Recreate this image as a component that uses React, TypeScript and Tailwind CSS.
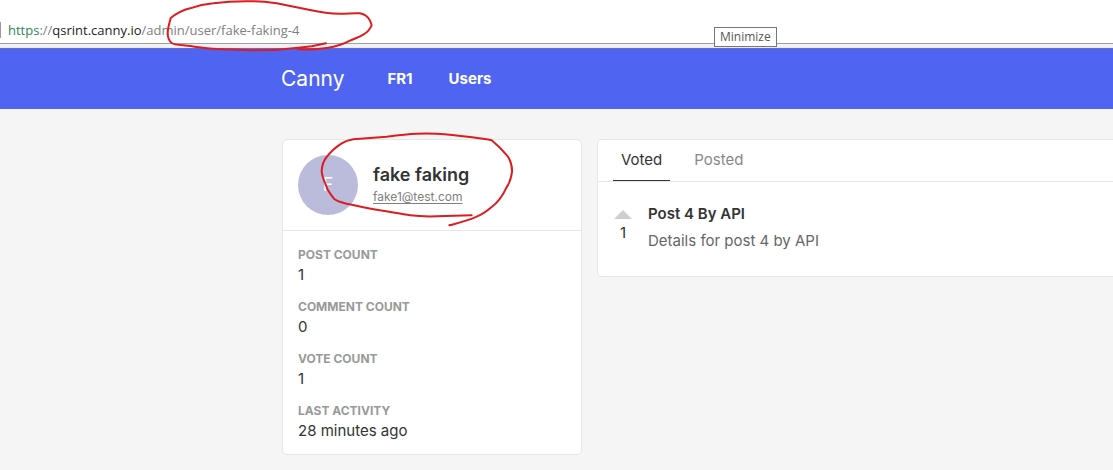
import React from "react";

interface Stat {
  label: string;
  value: string;
}

const stats: Stat[] = [
  { label: "Post count", value: "1" },
  { label: "Comment count", value: "0" },
  { label: "Vote count", value: "1" },
  { label: "Last activity", value: "28 minutes ago" },
];

const AddressBar: React.FC = () => {
  return (
    <div className="relative h-12 border-b border-[#e9e9ef] bg-[#f2f2f2]">
      <div className="flex h-11 items-center border-b border-[#a0a0a0] bg-white pt-4">
        <span className="h-4 w-px bg-[#9a9a9a]" />
        <p className="pl-[7px] font-['Open_Sans',sans-serif] text-[13px] leading-5 text-[#808080]">
          <span className="text-[#2f8458]">https</span>://
          <span className="text-[#222222]">qsrint.canny.io</span>
          /admin/user/fake-faking-4
        </p>
      </div>
      <div
        role="tooltip"
        className="absolute left-[714px] top-[27px] z-10 flex h-5 items-center border border-[#767676] bg-white px-[5px] font-['Open_Sans',sans-serif] text-xs text-[#575757]"
      >
        Minimize
      </div>
      <svg
        className="pointer-events-none absolute left-[160px] top-0 z-10 h-[52px] w-[220px]"
        viewBox="480 0 660 156"
        fill="none"
        stroke="#dc1c20"
        strokeWidth="6"
        strokeLinecap="round"
        strokeLinejoin="round"
      >
        <path d="M978 130L935 139L895 143C850 149 810 151 770 151C720 151 690 148 650 147C610 145 575 138 550 136C528 135 520 134 514 128C505 120 503 112 503 100C503 84 508 70 512 54C530 40 550 30 570 25C600 15 620 12 640 10C685 4 720 3 760 4C785 4 810 7 830 10C870 18 900 24 930 30C965 38 995 41 1020 41C1045 41 1060 39 1080 40C1095 43 1105 52 1110 62L1115 75C1110 90 1100 98 1090 104C1078 112 1062 116 1050 122C1034 130 1018 137 1000 140C960 149 925 149 895 148" />
      </svg>
    </div>
  );
};

const NavBar: React.FC = () => {
  return (
    <nav className="flex h-[61px] items-center border-t border-[#6470c8] bg-[#4f65f1] pl-[281px] text-white">
      <a href="#home" className="text-[21px] leading-7">
        Canny
      </a>
      <a href="#fr1" className="ml-[43px] text-[15px] font-bold">
        FR1
      </a>
      <a href="#users" className="ml-9 text-[15px] font-bold">
        Users
      </a>
    </nav>
  );
};

const ProfileCard: React.FC = () => {
  return (
    <section className="w-[300px] shrink-0 rounded-[5px] border border-[#e6e6e6] bg-white">
      <div className="relative flex items-center gap-[15px] border-b border-[#e8e8e8] p-[15px]">
        <div className="flex size-[60px] items-center justify-center rounded-full bg-[#bbbbdc] text-lg text-white">
          F
        </div>
        <div>
          <h1 className="text-lg font-semibold leading-6">fake faking</h1>
          <a
            href="mailto:fake1@test.com"
            className="block text-xs leading-5 text-[#808080] underline underline-offset-2"
          >
            fake1@test.com
          </a>
        </div>
        <svg
          className="pointer-events-none absolute left-[27px] top-[-10px] h-[100px] w-[210px]"
          viewBox="120 15 630 300"
          fill="none"
          stroke="#dc1c20"
          strokeWidth="6"
          strokeLinecap="round"
          strokeLinejoin="round"
        >
          <path d="M605 271L500 274C470 275 445 274 420 271C390 267 360 260 330 256C290 249 260 242 230 236C210 231 200 228 192 221C182 210 178 202 172 192C166 172 156 160 155 138C156 120 160 108 170 96C182 80 198 66 215 55C228 47 238 45 250 43L350 35C380 31 410 27 440 26C460 25 480 25 500 26C535 28 570 32 600 36C625 40 645 42 665 46C685 62 700 78 714 95C722 108 727 122 726 140C724 160 718 175 708 190C700 208 686 230 664 247C650 259 638 268 620 275C592 288 565 294 538 301" />
        </svg>
      </div>
      <dl className="flex flex-col gap-3 px-[15px] pb-[11px] pt-4">
        {stats.map((stat) => (
          <div key={stat.label}>
            <dt className="text-xs font-bold uppercase leading-4 text-[#999999]">
              {stat.label}
            </dt>
            <dd className="text-[15px] leading-6">{stat.value}</dd>
          </div>
        ))}
      </dl>
    </section>
  );
};

const ActivityCard: React.FC = () => {
  return (
    <section className="min-w-0 flex-1 self-start rounded-l-[5px] border border-r-0 border-[#e6e6e6] bg-white">
      <div className="flex h-[42px] border-b border-[#e8e8e8] px-[15px] text-[15px]">
        <button
          type="button"
          className="h-[41px] border-b border-[#333333] px-2"
        >
          Voted
        </button>
        <button
          type="button"
          className="ml-4 h-[41px] border-b border-transparent px-2 text-[#888888]"
        >
          Posted
        </button>
      </div>
      <div className="flex gap-4 px-4 pb-[25px] pt-[22px]">
        <button
          type="button"
          aria-label="1 vote"
          className="flex w-[18px] flex-col items-center pt-[6px]"
        >
          <svg className="h-[9px] w-[18px]" viewBox="0 0 18 9">
            <path d="M9 0L18 9H0Z" fill="#cfcfcf" />
          </svg>
          <span className="mt-1 text-[15px] leading-5">1</span>
        </button>
        <div>
          <h2 className="text-[15px] font-semibold leading-5">Post 4 By API</h2>
          <p className="mt-[7px] text-[15px] leading-5 text-[#666666]">
            Details for post 4 by API
          </p>
        </div>
      </div>
    </section>
  );
};

const App: React.FC = () => {
  return (
    <div className="min-h-screen overflow-x-hidden bg-[#f5f5f5] font-[Inter,sans-serif] text-[#333333]">
      <AddressBar />
      <NavBar />
      <main className="flex items-start gap-[15px] pl-[282px] pb-4 pt-[30px]">
        <ProfileCard />
        <ActivityCard />
      </main>
    </div>
  );
};

export default App;
